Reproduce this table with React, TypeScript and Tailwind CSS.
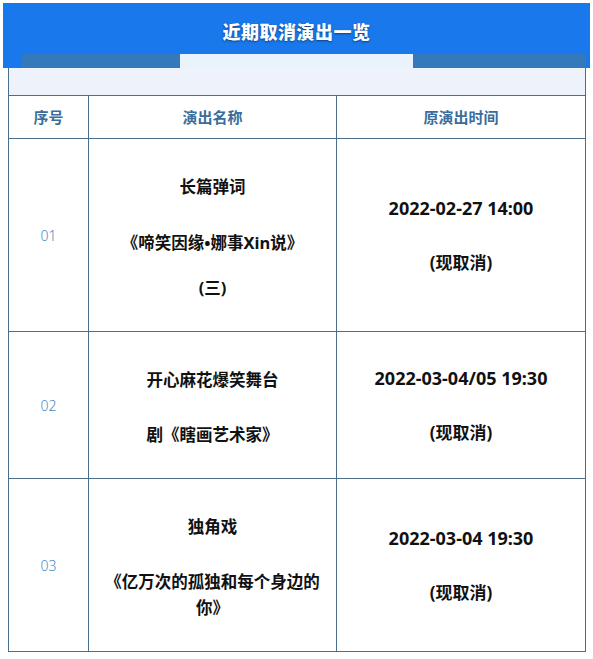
import React from "react";

interface Show {
  no: string;
  name: { text: string; gap: string }[];
  time: string;
}

const shows: Show[] = [
  {
    no: "01",
    name: [
      { text: "长篇弹词", gap: "" },
      { text: "《啼笑因缘•娜事Xin说》", gap: "mt-[30px]" },
      { text: "(三)", gap: "mt-[19px]" },
    ],
    time: "2022-02-27 14:00",
  },
  {
    no: "02",
    name: [
      { text: "开心麻花爆笑舞台", gap: "" },
      { text: "剧《瞎画艺术家》", gap: "mt-[29px]" },
    ],
    time: "2022-03-04/05 19:30",
  },
  {
    no: "03",
    name: [
      { text: "独角戏", gap: "" },
      { text: "《亿万次的孤独和每个身边的", gap: "mt-[29px]" },
      { text: "你》", gap: "" },
    ],
    time: "2022-03-04 19:30",
  },
];

export default function App() {
  return (
    <div className="w-[593px] h-[659px] bg-white pt-[3px] font-['Noto_Sans','Noto_Sans_CJK_SC',sans-serif] overflow-hidden">
      {/* title band */}
      <div className="mx-[3px] h-[65px] bg-[#1878ec] flex flex-col">
        <div className="flex-1 pt-[7px] flex items-center justify-center text-white text-[18px] font-black tracking-[0.5px] [text-shadow:0_1px_2px_rgba(20,40,80,0.7)]">
          近期取消演出一览
        </div>
        <div className="h-[14px] flex">
          <div className="w-[19px]" />
          <div className="w-[158px] bg-[#3379bb]" />
          <div className="w-[233px] bg-[#eaf3fb]" />
          <div className="w-[173px] bg-[#3379bb]" />
          <div className="flex-1" />
        </div>
      </div>

      {/* table */}
      <div className="ml-[8px] w-[578px]">
        <div className="h-[27px] bg-[#eef3fb] border-x border-[#4a6f8c]" />
        <div className="grid grid-cols-[80px_248px_249px] border-l border-t border-[#4a6f8c]">
          <div className="h-[43px] flex items-center justify-center border-r border-b border-[#4a6f8c] text-[15px] font-semibold text-[#3a6c9c]">
            序号
          </div>
          <div className="h-[43px] flex items-center justify-center border-r border-b border-[#4a6f8c] text-[15px] font-semibold text-[#3a6c9c]">
            演出名称
          </div>
          <div className="h-[43px] flex items-center justify-center border-r border-b border-[#4a6f8c] text-[15px] font-semibold text-[#3a6c9c]">
            原演出时间
          </div>

          {shows.map((s) => (
            <React.Fragment key={s.no}>
              <div className="flex items-center justify-center border-r border-b border-[#4a6f8c] text-[14px] font-light text-[#4a8bc4]">
                {s.no}
              </div>
              <div className="pt-[35px] pb-[30px] flex flex-col items-center border-r border-b border-[#4a6f8c] text-[16.5px] font-bold text-[#111] leading-[26px]">
                {s.name.map((p, i) => (
                  <div key={i} className={p.gap}>
                    {p.text}
                  </div>
                ))}
              </div>
              <div className="flex flex-col items-center justify-center border-r border-b border-[#4a6f8c] text-[#111] font-bold leading-[26px]">
                <div className="text-[18px]">{s.time}</div>
                <div className="mt-[29px] text-[17px]">(现取消)</div>
              </div>
            </React.Fragment>
          ))}
        </div>
      </div>
    </div>
  );
}
